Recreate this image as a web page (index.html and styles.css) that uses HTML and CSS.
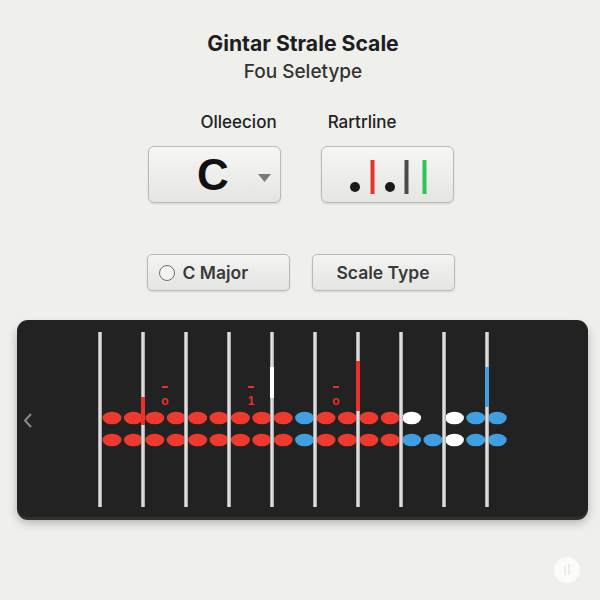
FILE: index.html
```html
<!DOCTYPE html>
<html lang="en">
<head>
<meta charset="utf-8">
<title>Gintar Strale Scale</title>
<link rel="stylesheet" href="styles.css">
</head>
<body>
<main class="page">
  <header class="header">
    <h1 class="title">Gintar Strale Scale</h1>
    <p class="subtitle">Fou Seletype</p>
  </header>

  <div class="labels">
    <span class="label">Olleecion</span>
    <span class="label">Rartrline</span>
  </div>

  <div class="pickers">
    <button class="picker picker-key" type="button">
      <span class="key">C</span>
      <svg class="caret" width="13" height="8" viewBox="0 0 13 8"><path d="M0 0H13L6.5 8Z" fill="#7a7a7a"/></svg>
    </button>
    <button class="picker picker-tone" type="button">
      <svg width="90" height="40" viewBox="0 0 90 40">
        <circle cx="5" cy="29" r="5" fill="#1a1a1a"/>
        <rect x="20.5" y="2" width="4" height="34" fill="#e8322a"/>
        <circle cx="40" cy="29" r="5" fill="#1a1a1a"/>
        <rect x="54.5" y="2" width="4" height="34" fill="#4a4a4a"/>
        <rect x="72.5" y="2" width="4" height="34" fill="#2fc257"/>
      </svg>
    </button>
  </div>

  <div class="actions">
    <button class="action action-major" type="button"><span class="radio"></span>C Major</button>
    <button class="action" type="button">Scale Type</button>
  </div>

  <section class="board">
    <svg class="fret" width="571" height="197" viewBox="0 0 571 197">
      <defs>
        <linearGradient id="str" x1="0" x2="1" y1="0" y2="0">
          <stop offset="0" stop-color="#8d8d8d"/>
          <stop offset="0.45" stop-color="#f2f2f2"/>
          <stop offset="1" stop-color="#9a9a9a"/>
        </linearGradient>
      </defs>
      <polyline points="14,94 8,100.5 14,107" fill="none" stroke="#8a8a8a" stroke-width="2"/>
      <g id="dots"></g>
      <g id="strings"></g>
      <rect x="124" y="77" width="4" height="28" fill="#e8322a"/>
      <rect x="253" y="47" width="4" height="31" fill="#ffffff"/>
      <rect x="339" y="41" width="4" height="50" fill="#e8322a"/>
      <rect x="468" y="47" width="4" height="40" fill="#3f9fe0"/>
      <g class="marks" fill="#e8322a">
        <rect x="145" y="66" width="6" height="2"/>
        <text x="148" y="85">o</text>
        <rect x="231" y="66" width="6" height="2"/>
        <text x="234" y="85">1</text>
        <rect x="316" y="66" width="6" height="2"/>
        <text x="319" y="85">o</text>
      </g>
    </svg>
  </section>

  <span class="corner">
    <svg width="26" height="26" viewBox="0 0 26 26"><circle cx="13" cy="13" r="13" fill="#fbfbfa"/><path d="M11 9v9M15 7v11" stroke="#ececea" stroke-width="2" fill="none"/></svg>
  </span>
</main>
<script>
(function(){
  var ns="http://www.w3.org/2000/svg";
  var s=document.getElementById("strings");
  for(var i=0;i<10;i++){
    var r=document.createElementNS(ns,"rect");
    r.setAttribute("x",81+43*i);r.setAttribute("y",12);
    r.setAttribute("width",4);r.setAttribute("height",175);
    r.setAttribute("fill","url(#str)");
    s.appendChild(r);
  }
  var R="#ee3a2e",B="#3f9fe0",W="#ffffff";
  var rows=[
    [R,R,R,R,R,R,R,R,R,B,R,R,R,R,W,null,W,B,B],
    [R,R,R,R,R,R,R,R,R,B,R,R,R,R,B,B,W,B,B]
  ];
  var d=document.getElementById("dots");
  rows.forEach(function(row,j){
    row.forEach(function(c,i){
      if(!c)return;
      var e=document.createElementNS(ns,"ellipse");
      e.setAttribute("cx",95+21.4*i);e.setAttribute("cy",j?120:98);
      e.setAttribute("rx",9.5);e.setAttribute("ry",6.3);
      e.setAttribute("fill",c);
      d.appendChild(e);
    });
  });
})();
</script>
</body>
</html>
```
FILE: styles.css
```css
* { box-sizing: border-box; }
html, body { margin: 0; padding: 0; }
body {
  background: #efefec;
  font-family: Inter, "Liberation Sans", Arial, sans-serif;
  color: #222;
  width: 600px;
  height: 600px;
  overflow: hidden;
}
.page {
  position: relative;
  width: 600px;
  height: 600px;
  display: flex;
  flex-direction: column;
  align-items: center;
  padding-top: 31px;
  padding-left: 1px;
}
.header { text-align: center; }
.title {
  margin: 0 0 0 5px;
  font-size: 21.2px;
  line-height: 24px;
  font-weight: 700;
  color: #1e1e1e;
}
.subtitle {
  margin: 6px 0 0 5px;
  font-size: 19px;
  line-height: 22px;
  font-weight: 500;
  color: #333;
}
.labels {
  margin-top: 29px;
  margin-right: 4px;
  display: flex;
  gap: 51px;
}
.label {
  font-size: 17px;
  line-height: 20px;
  font-weight: 500;
  color: #222;
}
.pickers {
  margin-top: 14px;
  display: flex;
  gap: 40px;
}
.picker {
  position: relative;
  width: 133px;
  height: 57px;
  border: 1px solid #b9b9b7;
  border-radius: 6px;
  background: linear-gradient(#f6f6f5, #e5e5e3);
  box-shadow: 0 1px 2px rgba(0,0,0,0.12);
  display: flex;
  align-items: center;
  justify-content: center;
  padding: 0;
  font-family: inherit;
}
.key {
  font-family: "Liberation Sans", Arial, sans-serif;
  font-size: 44px;
  font-weight: 700;
  line-height: 1;
  color: #111;
  margin-left: -2px;
}
.caret {
  position: absolute;
  right: 9px;
  top: 27px;
}
.picker-tone svg { margin-left: 16px; margin-top: 6px; }
.actions {
  margin-top: 51px;
  display: flex;
  gap: 22px;
}
.action {
  width: 143px;
  height: 37px;
  border: 1px solid #b9b9b7;
  border-radius: 5px;
  background: linear-gradient(#f4f4f3, #e4e4e2);
  box-shadow: 0 1px 2px rgba(0,0,0,0.12);
  font-family: inherit;
  font-size: 17.5px;
  font-weight: 600;
  color: #3a3a3a;
  display: flex;
  align-items: center;
  justify-content: center;
  padding: 0;
}
.action-major {
  justify-content: flex-start;
  padding-left: 11px;
  gap: 8px;
}
.radio {
  width: 16px;
  height: 16px;
  border: 1.5px solid #707070;
  border-radius: 50%;
  background: #f3f3f2;
}
.board {
  margin-top: 29px;
  margin-left: 3px;
  width: 571px;
  height: 197px;
  border-radius: 11px;
  background: #222222;
  box-shadow: 0 3px 0 #303030, 0 6px 10px rgba(0,0,0,0.25);
  overflow: hidden;
}
.fret { display: block; }
.marks text {
  font-family: "Liberation Sans", Arial, sans-serif;
  font-size: 12px;
  font-weight: 700;
  text-anchor: middle;
}
.corner {
  position: absolute;
  left: 554px;
  top: 557px;
  width: 26px;
  height: 26px;
}
.corner svg { display: block; }
```
